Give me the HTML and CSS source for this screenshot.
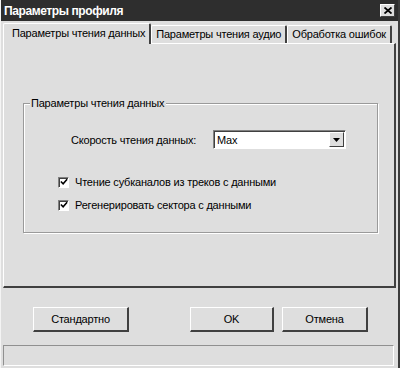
FILE: index.html
```html
<!DOCTYPE html>
<html lang="ru">
<head>
    <meta charset="utf-8">
    <title>Параметры профиля</title>
    <link rel="stylesheet" href="styles.css">
</head>
<body>
    <div class="window">
        <div class="titlebar">
            <span class="title">Параметры профиля</span>
            <span class="close">
                <svg width="8" height="7" viewBox="0 0 8 7"><path d="M0.5 0.5 L7.5 6.5 M7.5 0.5 L0.5 6.5" stroke="#000" stroke-width="1.8"/></svg>
            </span>
        </div>
        <div class="tabs">
            <div class="tab active">Параметры чтения данных</div>
            <div class="tab">Параметры чтения аудио</div>
            <div class="tab">Обработка ошибок</div>
        </div>
        <div class="panel">
            <div class="group">
                <div class="legend">Параметры чтения данных</div>
                <div class="speed_row">
                    <span class="speed_label">Скорость чтения данных:</span>
                    <div class="select">
                        <span class="select_value">Max</span>
                        <span class="select_btn">
                            <svg width="7" height="4" viewBox="0 0 7 4"><path d="M0 0 H7 L3.5 4 Z" fill="#000"/></svg>
                        </span>
                    </div>
                </div>
                <label class="check"><span class="box">
                    <svg width="9" height="9" viewBox="0 0 9 9"><path d="M1 4 L3.5 6.5 L8 1.5" stroke="#000" stroke-width="1.8" fill="none"/></svg>
                </span>Чтение субканалов из треков с данными</label>
                <label class="check"><span class="box">
                    <svg width="9" height="9" viewBox="0 0 9 9"><path d="M1 4 L3.5 6.5 L8 1.5" stroke="#000" stroke-width="1.8" fill="none"/></svg>
                </span>Регенерировать сектора с данными</label>
            </div>
        </div>
        <div class="buttons">
            <div class="btn btn_std">Стандартно</div>
            <div class="btn btn_ok">OK</div>
            <div class="btn btn_cancel">Отмена</div>
        </div>
        <div class="status"></div>
    </div>
</body>
</html>
```

FILE: styles.css
```css
html, body{
    margin: 0;
    padding: 0;
    background: #dedede;
}
body{
    font-family: "Liberation Sans", Arial, sans-serif;
    font-size: 11px;
    letter-spacing: -0.2px;
    color: #000;
}
.window{
    width: 400px;
    height: 368px;
    box-sizing: border-box;
    border-left: 1px solid #f4f4f4;
    border-right: 2px solid #3c3c3c;
    background: #dedede;
    display: flex;
    flex-direction: column;
}
.titlebar{
    height: 21px;
    background: #2e2e2e;
    color: #fff;
    font-weight: bold;
    font-size: 12px;
    letter-spacing: -0.4px;
    display: flex;
    align-items: center;
    justify-content: space-between;
    padding-left: 3px;
    padding-right: 3px;
}
.close{
    width: 15px;
    height: 13px;
    box-sizing: border-box;
    background: #dedede;
    border-top: 1px solid #fff;
    border-left: 1px solid #fff;
    border-right: 1px solid #404040;
    border-bottom: 1px solid #404040;
    display: flex;
    align-items: center;
    justify-content: center;
}

/* tabs */
.tabs{
    display: flex;
    align-items: flex-end;
    height: 21px;
    padding-left: 2px;
    margin-top: 1px;
}
.tab{
    height: 18px;
    line-height: 17px;
    box-sizing: border-box;
    padding: 0 4px 0 4px;
    border-top: 1px solid #fff;
    border-left: 1px solid #fff;
    border-right: 2px solid #404040;
    border-radius: 2px 2px 0 0;
    white-space: nowrap;
}
.tab.active{
    height: 21px;
    line-height: 19px;
    padding: 0 4px 0 8px;
    margin-bottom: -1px;
    background: #dedede;
    position: relative;
    z-index: 1;
}

.panel{
    height: 245px;
    margin: 0 2px 0 2px;
    box-sizing: border-box;
    border-top: 1px solid #fff;
    border-left: 1px solid #fff;
    border-right: 2px solid #404040;
    border-bottom: 2px solid #404040;
    padding: 59px 16px 0 19px;
}
.group{
    height: 130px;
    box-sizing: border-box;
    border: 1px solid #9a9a9a;
    box-shadow: inset 1px 1px 0 #fff, 1px 1px 0 #fff;
    position: relative;
    padding-top: 26px;
}
.legend{
    position: absolute;
    left: 6px;
    top: -8px;
    background: #dedede;
    padding: 0 2px 0 1px;
    line-height: 14px;
}
.speed_row{
    display: flex;
    align-items: center;
    padding-left: 47px;
}
.speed_label{
    width: 142px;
}
.select{
    width: 133px;
    height: 19px;
    box-sizing: border-box;
    background: #fff;
    border-top: 1px solid #808080;
    border-left: 1px solid #808080;
    border-right: 1px solid #fff;
    border-bottom: 1px solid #fff;
    box-shadow: inset 1px 1px 0 #404040;
    display: flex;
    align-items: center;
    justify-content: space-between;
    padding: 1px 1px 1px 3px;
}
.select_btn{
    width: 15px;
    height: 15px;
    box-sizing: border-box;
    background: #dedede;
    border-top: 1px solid #fff;
    border-left: 1px solid #fff;
    border-right: 1px solid #404040;
    border-bottom: 1px solid #404040;
    display: flex;
    align-items: center;
    justify-content: center;
}
.check{
    display: flex;
    align-items: center;
    margin-left: 34px;
    height: 14px;
}
.check:first-of-type{
    margin-top: 26px;
}
.check + .check{
    margin-top: 9px;
}
.box{
    width: 11px;
    height: 11px;
    box-sizing: border-box;
    background: #fff;
    border-top: 1px solid #808080;
    border-left: 1px solid #808080;
    border-right: 1px solid #fff;
    border-bottom: 1px solid #fff;
    box-shadow: inset 1px 1px 0 #404040;
    display: flex;
    align-items: center;
    justify-content: center;
    margin-right: 6px;
}
.box svg{
    width: 8px;
    height: 8px;
}

/* bottom buttons */
.buttons{
    display: flex;
    padding: 19px 0 0 32px;
    height: 57px;
    box-sizing: border-box;
}
.btn{
    height: 25px;
    box-sizing: border-box;
    border-top: 1px solid #fff;
    border-left: 1px solid #fff;
    border-right: 2px solid #404040;
    border-bottom: 2px solid #404040;
    display: flex;
    align-items: center;
    justify-content: center;
}
.btn_std{
    width: 96px;
}
.btn_ok{
    width: 84px;
    margin-left: 61px;
}
.btn_cancel{
    width: 86px;
    margin-left: 8px;
}
.status{
    height: 21px;
    margin: 0 4px 0 2px;
    box-sizing: border-box;
    border-top: 1px solid #909090;
    border-left: 1px solid #909090;
    border-right: 1px solid #fff;
    border-bottom: 1px solid #fff;
}
```
